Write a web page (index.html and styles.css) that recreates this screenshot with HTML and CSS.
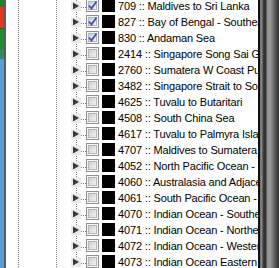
FILE: index.html
```html
<!DOCTYPE html>
<html>
<head>
<meta charset="utf-8">
<link rel="stylesheet" href="styles.css">
</head>
<body>
<div class="strip">
  <div class="c c1"></div>
  <div class="c c2"></div>
  <div class="c c3"></div>
  <div class="c c4"></div>
  <div class="c c5"></div>
</div>
<div class="edge"></div>
<div class="tree">
  <div class="rows">
    <div class="row"><span class="guide"></span><span class="guide off"></span><span class="guide"></span><span class="exp"><span class="btn"><svg width="10" height="10" viewBox="0 0 10 10"><polygon points="2,1.5 2,8.5 8,5" fill="#3a3a3a"/></svg></span></span><span class="chk"><span class="inner"></span><svg class="tick" width="13" height="13" viewBox="0 0 13 13"><path d="M3 6.5 L5.5 9.5 L10.5 2.5" fill="none" stroke="#3d4fa6" stroke-width="1.8"/></svg></span><span class="sw"></span><span class="txt">709 :: Maldives to Sri Lanka</span></div>
    <div class="row"><span class="guide"></span><span class="guide off"></span><span class="guide"></span><span class="exp"><span class="btn"><svg width="10" height="10" viewBox="0 0 10 10"><polygon points="2,1.5 2,8.5 8,5" fill="#3a3a3a"/></svg></span></span><span class="chk"><span class="inner"></span><svg class="tick" width="13" height="13" viewBox="0 0 13 13"><path d="M3 6.5 L5.5 9.5 L10.5 2.5" fill="none" stroke="#3d4fa6" stroke-width="1.8"/></svg></span><span class="sw"></span><span class="txt">827 :: Bay of Bengal - Southeast</span></div>
    <div class="row"><span class="guide"></span><span class="guide off"></span><span class="guide"></span><span class="exp"><span class="btn"><svg width="10" height="10" viewBox="0 0 10 10"><polygon points="2,1.5 2,8.5 8,5" fill="#3a3a3a"/></svg></span></span><span class="chk"><span class="inner"></span><svg class="tick" width="13" height="13" viewBox="0 0 13 13"><path d="M3 6.5 L5.5 9.5 L10.5 2.5" fill="none" stroke="#3d4fa6" stroke-width="1.8"/></svg></span><span class="sw"></span><span class="txt">830 :: Andaman Sea</span></div>
    <div class="row"><span class="guide"></span><span class="guide off"></span><span class="guide"></span><span class="exp"><span class="btn"><svg width="10" height="10" viewBox="0 0 10 10"><polygon points="2,1.5 2,8.5 8,5" fill="#3a3a3a"/></svg></span></span><span class="chk"><span class="inner"></span></span><span class="sw"></span><span class="txt">2414 :: Singapore Song Sai Gap</span></div>
    <div class="row"><span class="guide"></span><span class="guide off"></span><span class="guide"></span><span class="exp"><span class="btn"><svg width="10" height="10" viewBox="0 0 10 10"><polygon points="2,1.5 2,8.5 8,5" fill="#3a3a3a"/></svg></span></span><span class="chk"><span class="inner"></span></span><span class="sw"></span><span class="txt">2760 :: Sumatera W Coast Pulau</span></div>
    <div class="row"><span class="guide"></span><span class="guide off"></span><span class="guide"></span><span class="exp"><span class="btn"><svg width="10" height="10" viewBox="0 0 10 10"><polygon points="2,1.5 2,8.5 8,5" fill="#3a3a3a"/></svg></span></span><span class="chk"><span class="inner"></span></span><span class="sw"></span><span class="txt">3482 :: Singapore Strait to South China Sea</span></div>
    <div class="row"><span class="guide"></span><span class="guide off"></span><span class="guide"></span><span class="exp"><span class="btn"><svg width="10" height="10" viewBox="0 0 10 10"><polygon points="2,1.5 2,8.5 8,5" fill="#3a3a3a"/></svg></span></span><span class="chk"><span class="inner"></span></span><span class="sw"></span><span class="txt">4625 :: Tuvalu to Butaritari</span></div>
    <div class="row"><span class="guide"></span><span class="guide off"></span><span class="guide"></span><span class="exp"><span class="btn"><svg width="10" height="10" viewBox="0 0 10 10"><polygon points="2,1.5 2,8.5 8,5" fill="#3a3a3a"/></svg></span></span><span class="chk"><span class="inner"></span></span><span class="sw"></span><span class="txt">4508 :: South China Sea</span></div>
    <div class="row"><span class="guide"></span><span class="guide off"></span><span class="guide"></span><span class="exp"><span class="btn"><svg width="10" height="10" viewBox="0 0 10 10"><polygon points="2,1.5 2,8.5 8,5" fill="#3a3a3a"/></svg></span></span><span class="chk"><span class="inner"></span></span><span class="sw"></span><span class="txt">4617 :: Tuvalu to Palmyra Island</span></div>
    <div class="row"><span class="guide"></span><span class="guide off"></span><span class="guide"></span><span class="exp"><span class="btn"><svg width="10" height="10" viewBox="0 0 10 10"><polygon points="2,1.5 2,8.5 8,5" fill="#3a3a3a"/></svg></span></span><span class="chk"><span class="inner"></span></span><span class="sw"></span><span class="txt">4707 :: Maldives to Sumatera</span></div>
    <div class="row"><span class="guide"></span><span class="guide off"></span><span class="guide"></span><span class="exp"><span class="btn"><svg width="10" height="10" viewBox="0 0 10 10"><polygon points="2,1.5 2,8.5 8,5" fill="#3a3a3a"/></svg></span></span><span class="chk"><span class="inner"></span></span><span class="sw"></span><span class="txt">4052 :: North Pacific Ocean - East</span></div>
    <div class="row"><span class="guide"></span><span class="guide off"></span><span class="guide"></span><span class="exp"><span class="btn"><svg width="10" height="10" viewBox="0 0 10 10"><polygon points="2,1.5 2,8.5 8,5" fill="#3a3a3a"/></svg></span></span><span class="chk"><span class="inner"></span></span><span class="sw"></span><span class="txt">4060 :: Australasia and Adjacent</span></div>
    <div class="row"><span class="guide"></span><span class="guide off"></span><span class="guide"></span><span class="exp"><span class="btn"><svg width="10" height="10" viewBox="0 0 10 10"><polygon points="2,1.5 2,8.5 8,5" fill="#3a3a3a"/></svg></span></span><span class="chk"><span class="inner"></span></span><span class="sw"></span><span class="txt">4061 :: South Pacific Ocean - West</span></div>
    <div class="row"><span class="guide"></span><span class="guide off"></span><span class="guide"></span><span class="exp"><span class="btn"><svg width="10" height="10" viewBox="0 0 10 10"><polygon points="2,1.5 2,8.5 8,5" fill="#3a3a3a"/></svg></span></span><span class="chk"><span class="inner"></span></span><span class="sw"></span><span class="txt">4070 :: Indian Ocean - Southeast</span></div>
    <div class="row"><span class="guide"></span><span class="guide off"></span><span class="guide"></span><span class="exp"><span class="btn"><svg width="10" height="10" viewBox="0 0 10 10"><polygon points="2,1.5 2,8.5 8,5" fill="#3a3a3a"/></svg></span></span><span class="chk"><span class="inner"></span></span><span class="sw"></span><span class="txt">4071 :: Indian Ocean - Northeast</span></div>
    <div class="row"><span class="guide"></span><span class="guide off"></span><span class="guide"></span><span class="exp"><span class="btn"><svg width="10" height="10" viewBox="0 0 10 10"><polygon points="2,1.5 2,8.5 8,5" fill="#3a3a3a"/></svg></span></span><span class="chk"><span class="inner"></span></span><span class="sw"></span><span class="txt">4072 :: Indian Ocean - Western</span></div>
    <div class="row"><span class="guide"></span><span class="guide off"></span><span class="guide"></span><span class="exp"><span class="btn"><svg width="10" height="10" viewBox="0 0 10 10"><polygon points="2,1.5 2,8.5 8,5" fill="#3a3a3a"/></svg></span></span><span class="chk"><span class="inner"></span></span><span class="sw"></span><span class="txt">4073 :: Indian Ocean Eastern</span></div>
  </div>
</div>
<div class="scroll"></div>
</body>
</html>
```

FILE: styles.css
```css
html, body {
  margin: 0;
  padding: 0;
}
body {
  width: 279px;
  height: 268px;
  overflow: hidden;
  display: flex;
  background: #ffffff;
  font-family: "Liberation Sans", Arial, sans-serif;
  font-size: 11px;
  color: #000;
}
.strip {
  width: 4px;
  flex: none;
  display: flex;
  flex-direction: column;
}
.c1 { height: 7px; background: #1d7f2c; }
.c2 { height: 21px; background: #e1381f; border-bottom: 1px solid #6a3a20; }
.c3 { height: 20px; background: #1f8a30; }
.c4 { height: 10px; background: #2f8a62; }
.c5 { flex: 1; background: #5d9dd3; }
.edge {
  width: 2px;
  flex: none;
  background: #5c5c5c;
}
.tree {
  flex: 1;
  min-width: 0;
  overflow: hidden;
  padding-left: 3px;
}
.rows {
  margin-top: -2px;
}
.row {
  display: flex;
  align-items: flex-start;
  height: 16px;
  line-height: 16px;
  white-space: nowrap;
}
.guide {
  flex: none;
  width: 19px;
  height: 16px;
  background: repeating-linear-gradient(to bottom, #7c7c7c 0 1px, transparent 1px 2px) 9px 0 / 1px 100% no-repeat;
}
.guide.off {
  background: none;
}
.exp {
  flex: none;
  width: 20px;
  height: 16px;
  display: flex;
  align-items: flex-start;
  background:
    repeating-linear-gradient(to right, #7c7c7c 0 1px, transparent 1px 2px) 15px 9px / 5px 1px no-repeat,
    repeating-linear-gradient(to bottom, #7c7c7c 0 1px, transparent 1px 2px) 10px 0 / 1px 100% no-repeat;
}
.btn {
  display: block;
  width: 10px;
  height: 10px;
  margin: 3px 0 0 5px;
  background: #e9e9e9;
}
.btn svg {
  display: block;
}
.chk {
  position: relative;
  flex: none;
  box-sizing: border-box;
  width: 13px;
  height: 13px;
  margin-top: 1px;
  border: 1px solid #8e8f8f;
  background: #f4f4f4;
  padding: 1px;
}
.inner {
  display: block;
  box-sizing: border-box;
  width: 9px;
  height: 9px;
  border: 1px solid #b3b7bd;
  background: linear-gradient(135deg, #c9ccd1, #f7f7f7);
}
.tick {
  position: absolute;
  left: -1px;
  top: -1px;
}
.sw {
  flex: none;
  width: 13px;
  height: 13px;
  margin: 1px 0 0 3px;
  background: #000;
}
.txt {
  margin-left: 3px;
  letter-spacing: -0.15px;
}
.scroll {
  width: 21px;
  flex: none;
  background: linear-gradient(to right, #111 0 2px, #6e6e6e 2px, #8a8a8a 4px, #3e3e3e 5px, #2c2c2c 8px, #909090 9px, #9c9c9c 12px, #747474 15px, #4c4c4c 18px, #303030 21px);
}
```
